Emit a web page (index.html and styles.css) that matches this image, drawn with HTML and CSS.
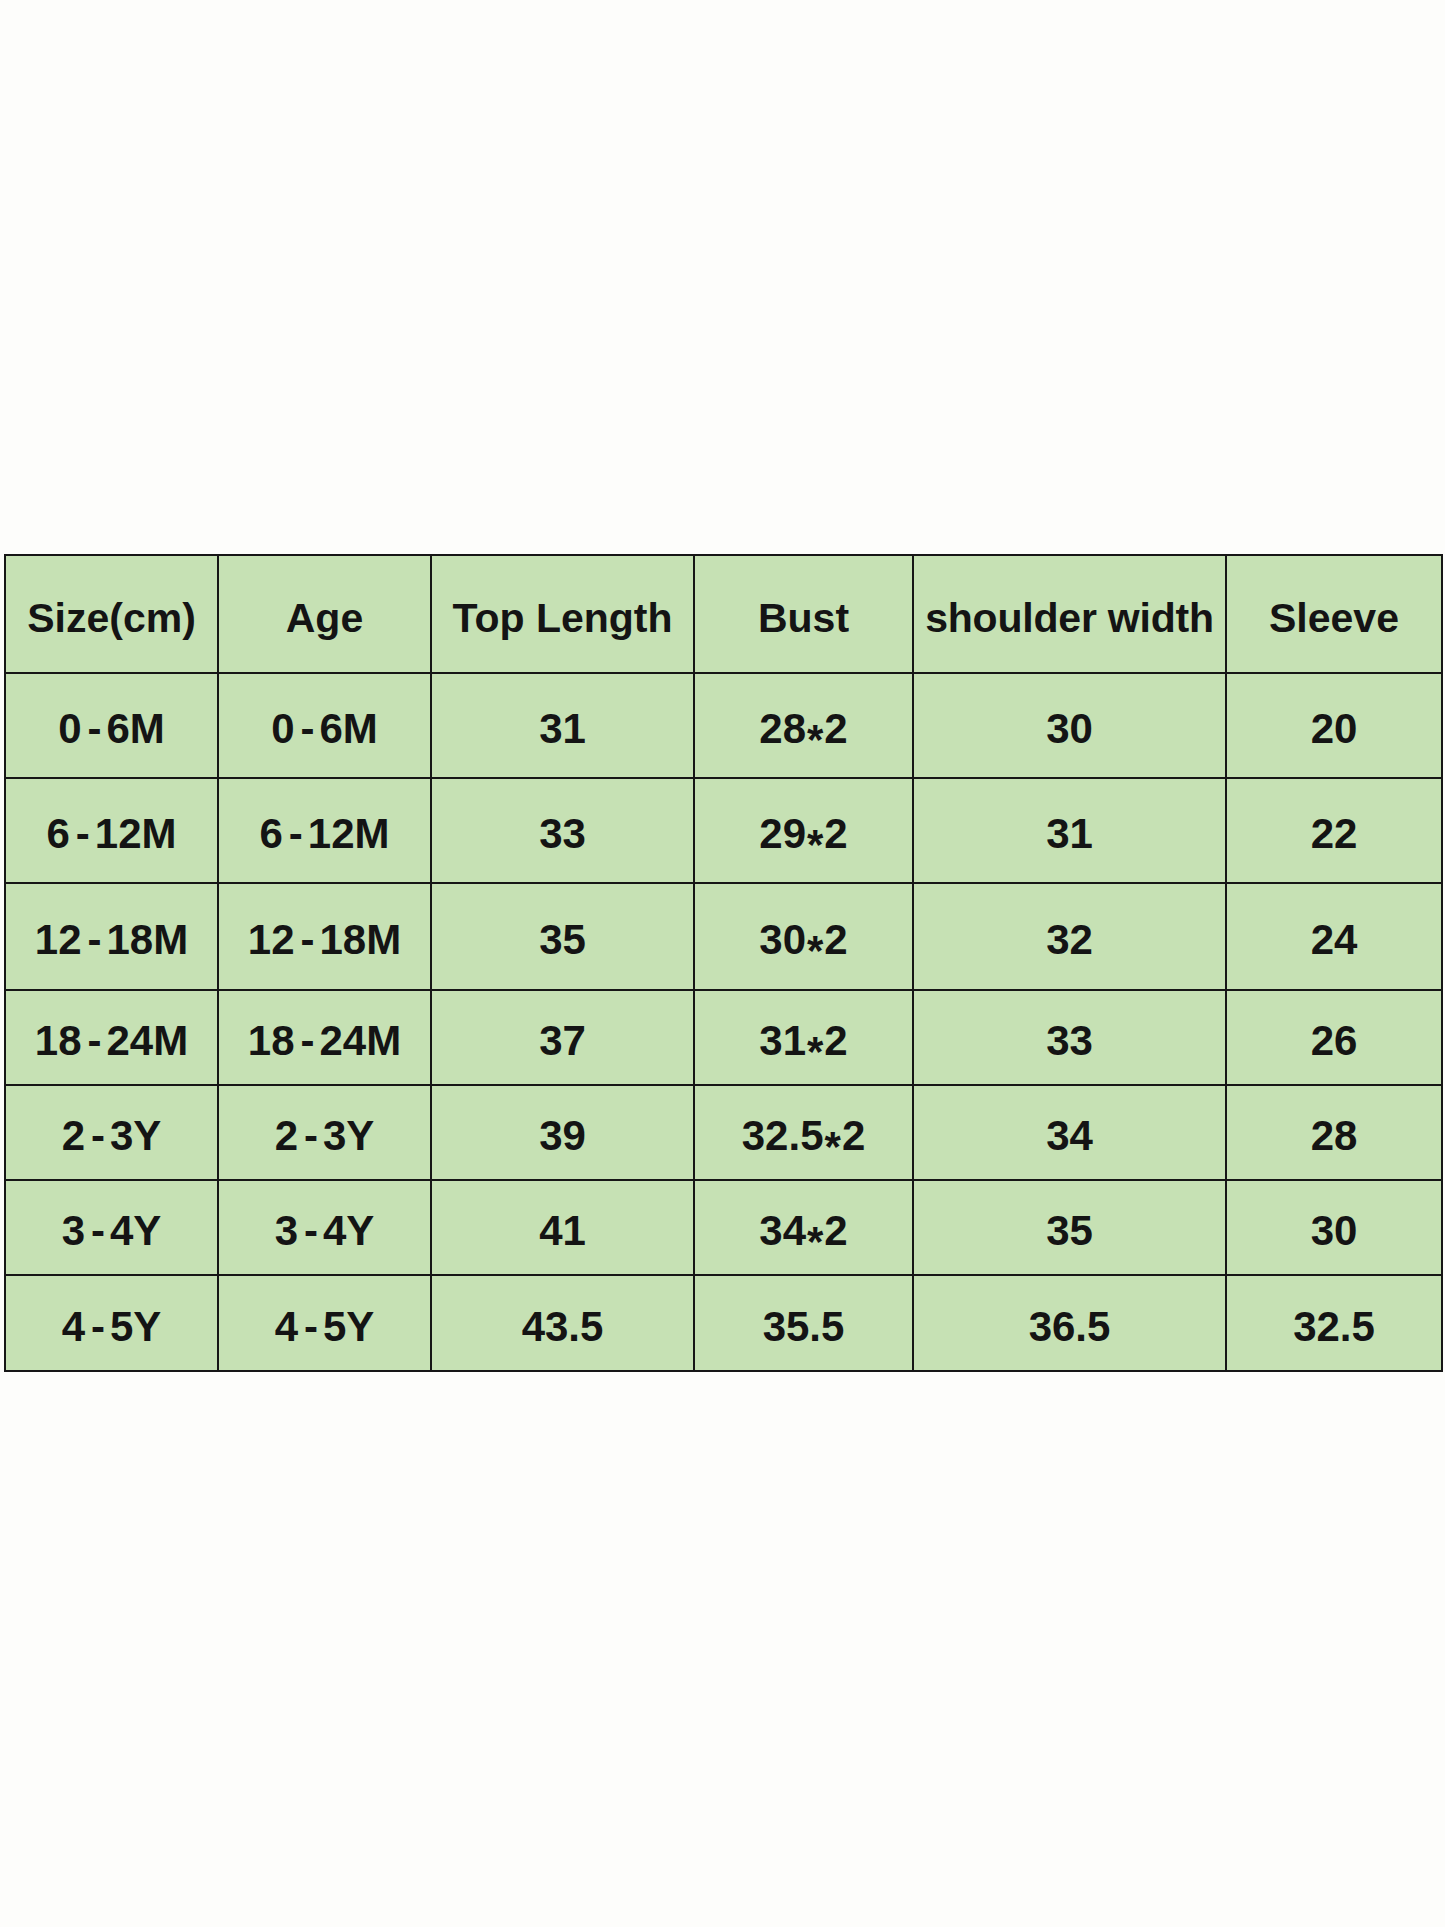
FILE: index.html
```html
<!DOCTYPE html>
<html lang="en">
<head>
<meta charset="utf-8">
<title>Size Chart</title>
<link rel="stylesheet" href="styles.css">
</head>
<body>
<main class="page">
  <div class="chart">
    <div class="cell head">Size(cm)</div>
    <div class="cell head">Age</div>
    <div class="cell head">Top Length</div>
    <div class="cell head">Bust</div>
    <div class="cell head narrow">shoulder width</div>
    <div class="cell head">Sleeve</div>

    <div class="cell">0<span class="dash">-</span>6M</div>
    <div class="cell">0<span class="dash">-</span>6M</div>
    <div class="cell">31</div>
    <div class="cell">28<span class="star">*</span>2</div>
    <div class="cell">30</div>
    <div class="cell">20</div>

    <div class="cell">6<span class="dash">-</span>12M</div>
    <div class="cell">6<span class="dash">-</span>12M</div>
    <div class="cell">33</div>
    <div class="cell">29<span class="star">*</span>2</div>
    <div class="cell">31</div>
    <div class="cell">22</div>

    <div class="cell">12<span class="dash">-</span>18M</div>
    <div class="cell">12<span class="dash">-</span>18M</div>
    <div class="cell">35</div>
    <div class="cell">30<span class="star">*</span>2</div>
    <div class="cell">32</div>
    <div class="cell">24</div>

    <div class="cell">18<span class="dash">-</span>24M</div>
    <div class="cell">18<span class="dash">-</span>24M</div>
    <div class="cell">37</div>
    <div class="cell">31<span class="star">*</span>2</div>
    <div class="cell">33</div>
    <div class="cell">26</div>

    <div class="cell">2<span class="dash">-</span>3Y</div>
    <div class="cell">2<span class="dash">-</span>3Y</div>
    <div class="cell">39</div>
    <div class="cell">32.5<span class="star">*</span>2</div>
    <div class="cell">34</div>
    <div class="cell">28</div>

    <div class="cell">3<span class="dash">-</span>4Y</div>
    <div class="cell">3<span class="dash">-</span>4Y</div>
    <div class="cell">41</div>
    <div class="cell">34<span class="star">*</span>2</div>
    <div class="cell">35</div>
    <div class="cell">30</div>

    <div class="cell">4<span class="dash">-</span>5Y</div>
    <div class="cell">4<span class="dash">-</span>5Y</div>
    <div class="cell">43.5</div>
    <div class="cell">35.5</div>
    <div class="cell">36.5</div>
    <div class="cell">32.5</div>
  </div>
</main>
</body>
</html>
```

FILE: styles.css
```css
html, body {
  margin: 0;
  padding: 0;
  background: #fdfdfb;
}

.page {
  width: 1445px;
  height: 1927px;
  padding-top: 554px;
  box-sizing: border-box;
}

.chart {
  margin-left: 4px;
  width: 1439px;
  display: grid;
  grid-template-columns: 213px 213px 263px 219px 313px 216px;
  grid-template-rows: 118px 105px 105px 107px 95px 95px 95px 96px;
  border-left: 2px solid #161616;
  border-top: 2px solid #161616;
  box-sizing: border-box;
  background: #c6e1b4;
}

.cell {
  display: flex;
  align-items: center;
  justify-content: center;
  padding-top: 7px;
  border-right: 2px solid #161616;
  border-bottom: 2px solid #161616;
  font-family: "Liberation Sans", Arial, sans-serif;
  font-weight: 700;
  font-size: 42px;
  line-height: 48px;
  color: #141414;
  white-space: nowrap;
}

.head {
  font-size: 41px;
}

.narrow {
  letter-spacing: -0.2px;
}

.dash {
  margin: 0 5px 0 6px;
}

.star {
  display: inline-block;
  margin: 0 1px;
  transform: translateY(0.26em);
}
```
